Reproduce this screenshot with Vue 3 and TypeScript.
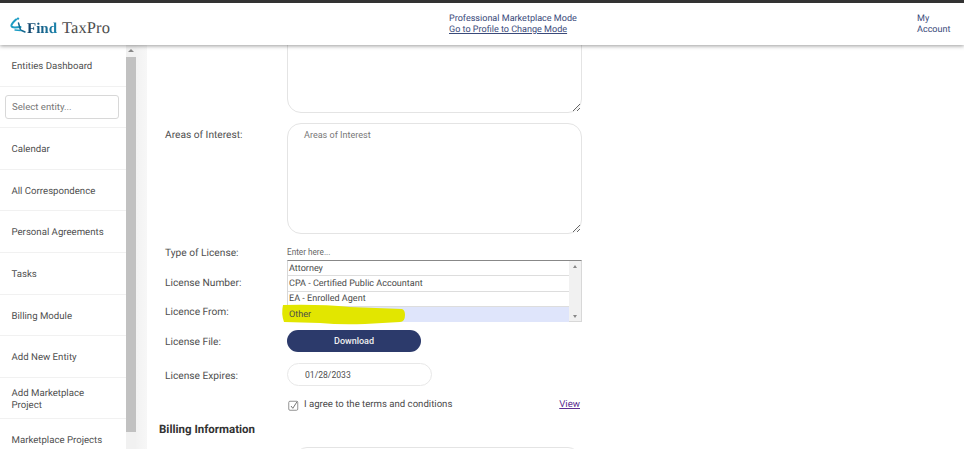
<script setup lang="ts">
const navTop = ['Entities Dashboard']
const navItems = [
  'Calendar',
  'All Correspondence',
  'Personal Agreements',
  'Tasks',
  'Billing Module',
  'Add New Entity',
  'Add Marketplace Project',
  'Marketplace Projects'
]
const licenseTypes = ['Attorney', 'CPA - Certified Public Accountant', 'EA - Enrolled Agent', 'Other']
</script>

<template>
  <div class="page">
    <header class="header">
      <a class="logo">
        <svg class="logo-mark" width="20" height="18" viewBox="0 0 20 18">
          <path d="M6 2.5 Q1 7 1.5 9 Q2 10.5 5 10.5 L10.5 10" fill="none" stroke="#1b9cc4" stroke-width="2.1" stroke-linecap="round" />
          <path d="M8.5 6 L10.5 13 L15 15" fill="none" stroke="#14688f" stroke-width="1.5" stroke-linecap="round" stroke-linejoin="round" />
          <path d="M5 13 L10.5 13.5" fill="none" stroke="#1b9cc4" stroke-width="1.3" stroke-linecap="round" />
          <circle cx="8" cy="1.6" r="1.2" fill="#1b9cc4" />
        </svg>
        <span class="logo-find">Find</span>
        <span class="logo-tax">TaxPro</span>
      </a>
      <div class="mode">
        <div>Professional Marketplace Mode</div>
        <a class="mode-link">Go to Profile to Change Mode</a>
      </div>
      <div class="account">My<br />Account</div>
    </header>

    <div class="body">
      <aside class="sidebar">
        <nav class="nav">
          <div v-for="item in navTop" :key="item" class="nav-item">{{ item }}</div>
          <div class="nav-item nav-input">
            <input class="entity-input" placeholder="Select entity..." />
          </div>
          <div v-for="item in navItems" :key="item" class="nav-item">
            <span>{{ item }}</span>
          </div>
        </nav>
        <div class="scrollbar">
          <span class="arrow-up"></span>
          <div class="thumb"></div>
        </div>
      </aside>
      <div class="gutter"></div>

      <main class="main">
        <div class="row row-top">
          <span class="label"></span>
          <textarea class="area area-first"></textarea>
        </div>
        <div class="row row-area">
          <span class="label">Areas of Interest:</span>
          <textarea class="area" placeholder="Areas of Interest"></textarea>
        </div>

        <div class="row row-type">
          <span class="label">Type of License:</span>
          <div class="field">
            <input class="search" placeholder="Enter here..." />
            <div class="listbox">
              <div class="options">
                <div
                  v-for="(opt, i) in licenseTypes"
                  :key="opt"
                  class="option"
                  :class="{ selected: i === licenseTypes.length - 1 }"
                >
                  <span class="option-text">{{ opt }}</span>
                </div>
              </div>
              <div class="list-scroll">
                <span class="arrow-up small"></span>
                <span class="arrow-down small"></span>
              </div>
              <svg class="marker" width="126" height="24" viewBox="0 0 126 24">
                <path
                  d="M3 3 Q40 2 70 5 L122 7 Q125 8 125 13 Q125 20 120 20 L85 22 Q60 23 40 21 L4 20 Q1 12 3 3 Z"
                  fill="#e2e600"
                />
              </svg>
            </div>
          </div>
        </div>
        <div class="row row-number"><span class="label">License Number:</span></div>
        <div class="row row-from"><span class="label">Licence From:</span></div>
        <div class="row row-file">
          <span class="label">License File:</span>
          <button class="download" type="button">Download</button>
        </div>
        <div class="row row-expires">
          <span class="label">License Expires:</span>
          <input class="date" value="01/28/2033" />
        </div>
        <div class="row row-terms">
          <span class="label"></span>
          <div class="terms">
            <svg width="11" height="11" viewBox="0 0 11 11" class="check">
              <rect x="0.75" y="1.25" width="9" height="9" rx="1.2" fill="none" stroke="#777" stroke-width="0.8" />
              <path d="M3 6 L4.8 8.3 L9.2 1.5" fill="none" stroke="#666" stroke-width="0.9" />
            </svg>
            <span>I agree to the terms and conditions</span>
            <a class="view">View</a>
          </div>
        </div>
        <h3 class="billing">Billing Information</h3>
        <div class="row">
          <span class="label"></span>
          <input class="billing-input" />
        </div>
      </main>
    </div>
  </div>
</template>

<style>
html,
body {
  margin: 0;
  overflow: hidden;
  background: #fff;
}
</style>

<style scoped>
.page {
  width: 964px;
  height: 449px;
  overflow: hidden;
  display: flex;
  flex-direction: column;
  font-family: Roboto, 'Liberation Sans', sans-serif;
  font-size: 10.2px;
  color: #4a4a4a;
  border-top: 3px solid #333;
  box-sizing: border-box;
  text-rendering: geometricPrecision;
}

.header {
  height: 42px;
  flex: none;
  display: flex;
  align-items: center;
  background: #fff;
  box-shadow: 0 1px 4px rgba(0, 0, 0, 0.4);
  position: relative;
  z-index: 2;
}

.logo {
  width: 449px;
  flex: none;
  padding: 8px 0 0 10px;
  box-sizing: border-box;
  display: flex;
  align-items: baseline;
  font-family: 'Liberation Serif', serif;
}

.logo-mark {
  margin-right: -3px;
  align-self: center;
  margin-top: -5px;
}

.logo-find {
  font-weight: 700;
  font-size: 15px;
  margin-right: 5px;
  background: linear-gradient(to right, #123f66, #1b84ad);
  -webkit-background-clip: text;
  background-clip: text;
  color: transparent;
}

.logo-tax {
  color: #4d4d4d;
  font-size: 16.5px;
  letter-spacing: 0.1px;
}

.mode {
  width: 468px;
  flex: none;
  font-size: 9.05px;
  line-height: 11px;
  padding-top: 2px;
  color: #3a4a7a;
}

.mode-link {
  text-decoration: underline;
}

.account {
  font-size: 9.05px;
  line-height: 11px;
  padding-top: 2px;
  color: #3a4a7a;
}

.body {
  flex: 1;
  min-height: 0;
  display: flex;
}

.sidebar {
  width: 136px;
  flex: none;
  display: flex;
}

.nav {
  width: 126px;
  flex: none;
}

.nav-item {
  height: 41.6px;
  box-sizing: border-box;
  display: flex;
  align-items: center;
  padding: 3px 11.5px 0;
  border-bottom: 1px solid #f1f1f1;
  line-height: 11.5px;
  font-size: 9.65px;
  color: #4f4f4f;
}

.nav-input {
  padding-top: 0;
}

.entity-input {
  width: 114px;
  height: 24px;
  flex: none;
  margin-left: -6.5px;
  box-sizing: border-box;
  padding: 0 6px;
  border: 1px solid #d8d8d8;
  border-radius: 3px;
  font: inherit;
  outline: none;
}

.entity-input::placeholder {
  color: #777;
}

.scrollbar {
  width: 10px;
  flex: none;
  background: #f1f1f1;
  display: flex;
  flex-direction: column;
  align-items: center;
}

.arrow-up,
.arrow-down {
  display: block;
  width: 0;
  height: 0;
  border-left: 3px solid transparent;
  border-right: 3px solid transparent;
}

.arrow-up {
  border-bottom: 3px solid #888;
  margin-top: 4px;
}

.arrow-down {
  border-top: 3px solid #888;
}

.thumb {
  width: 10px;
  height: 375px;
  margin-top: 5px;
  background: #c1c1c1;
}

.gutter {
  width: 11px;
  flex: none;
  background: linear-gradient(to right, #f2f2f2, #f7f7f7);
}

.main {
  flex: 1;
  min-width: 0;
  overflow: hidden;
  padding-left: 18px;
  line-height: 12px;
}

.row {
  display: flex;
  align-items: center;
}

.label {
  width: 122px;
  flex: none;
  color: #4f4f4f;
  padding-top: 4px;
}

.row-top {
  height: 68px;
  align-items: flex-end;
}

.area {
  width: 295px;
  height: 111px;
  flex: none;
  box-sizing: border-box;
  padding: 5px 16px;
  border: 1px solid #e4e4e4;
  border-radius: 14px;
  font: inherit;
  font-size: 9.05px;
  line-height: 12px;
  outline: none;
  resize: vertical;
}

.area::placeholder {
  color: #777;
}

.area-first {
  height: 100px;
  flex: none;
}

.row-area {
  margin-top: 10px;
  align-items: flex-start;
}

.row-area .label {
  padding-top: 7px;
}

.row-type {
  height: 30px;
  margin-top: 3px;
}

.field {
  width: 295px;
  position: relative;
}

.search {
  display: block;
  width: 100%;
  box-sizing: border-box;
  border: 0;
  padding: 0;
  font: inherit;
  font-size: 8.2px;
  height: 12px;
  outline: none;
}

.search::placeholder {
  color: #666;
}

.listbox {
  position: absolute;
  top: 14px;
  left: 0;
  width: 295px;
  height: 62px;
  box-sizing: border-box;
  display: flex;
  background: #fff;
  border: 1px solid #d8d8d8;
  border-top: 1px solid #888;
  z-index: 1;
}

.options {
  flex: 1;
  min-width: 0;
}

.option {
  height: 15.25px;
  box-sizing: border-box;
  padding: 1px 0 0 1px;
  display: flex;
  align-items: center;
  border-bottom: 1px solid #ddd;
  font-size: 9.05px;
  color: #4a4a4a;
}

.option-text {
  position: relative;
  z-index: 2;
}

.option.selected {
  background: #dfe5fb;
  border-bottom: 0;
}

.list-scroll {
  width: 12px;
  flex: none;
  background: #f1f1f1;
  display: flex;
  flex-direction: column;
  justify-content: space-between;
  align-items: center;
  padding: 0 0 3px;
}

.arrow-up.small {
  border-left-width: 2.5px;
  border-right-width: 2.5px;
}

.arrow-down.small {
  border-left-width: 2.5px;
  border-right-width: 2.5px;
}

.marker {
  position: absolute;
  left: -8px;
  top: 41px;
  z-index: 1;
}

.row-number {
  height: 29.5px;
}

.row-from {
  height: 29.5px;
}

.row-file {
  height: 30px;
}

.download {
  width: 134px;
  height: 22px;
  border: 0;
  border-radius: 11px;
  background: #2c3a6b;
  color: #f0f0f0;
  font: inherit;
  font-size: 9px;
  font-weight: 500;
  padding: 0;
}

.row-expires {
  height: 37px;
}

.date {
  width: 145px;
  height: 23px;
  box-sizing: border-box;
  border: 1px solid #e8e8e8;
  border-radius: 12px;
  padding: 0 17px;
  font: inherit;
  font-size: 8.6px;
  color: #4f4f4f;
  outline: none;
}

.row-terms {
  height: 22px;
}

.terms {
  width: 292px;
  display: flex;
  align-items: center;
  font-size: 9.6px;
  padding: 2px 0 0 1px;
}

.check {
  margin-right: 5px;
  flex: none;
}

.view {
  margin-left: auto;
  color: #5c2e91;
  text-decoration: underline;
}

.billing {
  margin: 0 0 0 -6px;
  height: 28px;
  line-height: 28px;
  font-size: 11.5px;
  font-weight: 700;
  color: #333;
}

.billing-input {
  width: 285px;
  height: 24px;
  margin: 4px 0 0 8px;
  box-sizing: border-box;
  border: 1px solid #e4e4e4;
  border-radius: 12px;
  outline: none;
}
</style>
